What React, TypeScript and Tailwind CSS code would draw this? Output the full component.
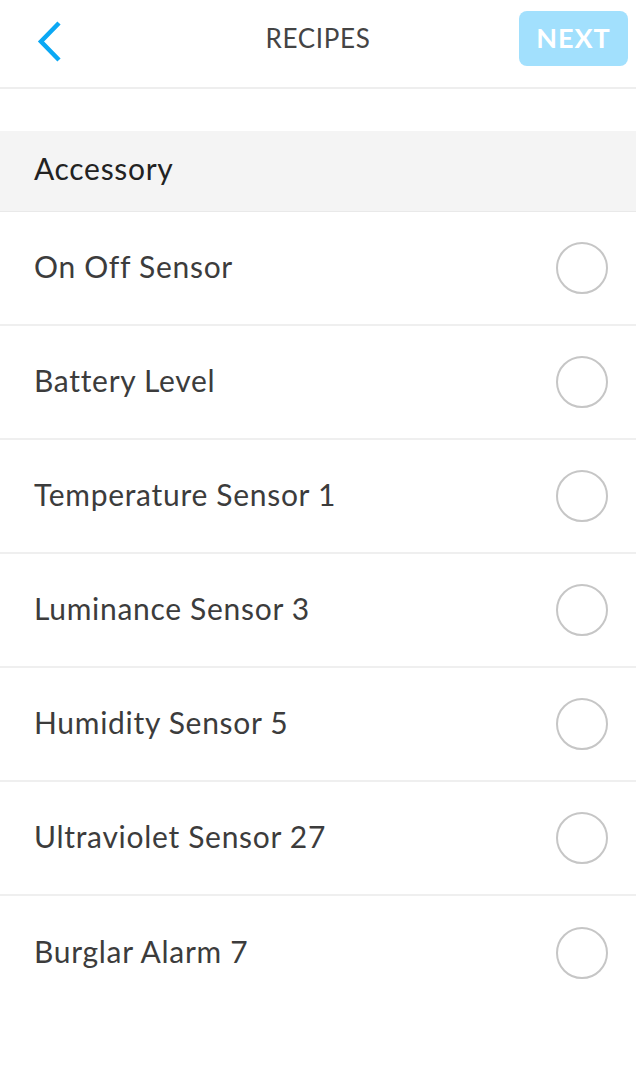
import React from 'react';

const items = [
  'On Off Sensor',
  'Battery Level',
  'Temperature Sensor 1',
  'Luminance Sensor 3',
  'Humidity Sensor 5',
  'Ultraviolet Sensor 27',
  'Burglar Alarm 7',
];

export default function App() {
  return (
    <div className="min-h-[1083px] w-[636px] bg-white font-['Lato',sans-serif]">
      {/* Header */}
      <div className="grid h-[89px] grid-cols-[1fr_auto_1fr] items-center border-b-2 border-[#eeeeee] px-[8px] pb-[10px]">
        <svg width="30" height="44" viewBox="0 0 30 44" fill="none" className="ml-[28px] mt-[6px]">
          <path d="M23 3 L5 21.5 L23 40" stroke="#0ba8f4" strokeWidth="4.5" strokeLinecap="butt" strokeLinejoin="miter" />
        </svg>
        <div className="text-[26px] tracking-[0.7px] text-[#444444]">RECIPES</div>
        <button className="flex h-[55px] w-[109px] items-center justify-center justify-self-end rounded-[8px] bg-[#a2e0fd] text-[27px] font-bold tracking-[1px] text-white">
          NEXT
        </button>
      </div>

      <div className="h-[42px]" />

      {/* Section header */}
      <div className="flex h-[81px] items-center border-b border-[#e9e9e9] bg-[#f4f4f4] pb-[5px] pl-[34px] text-[30px] tracking-[0.7px] text-[#222222]">
        Accessory
      </div>

      {items.map((label, i) => (
        <div
          key={label}
          className={`flex h-[114px] items-center justify-between pl-[34px] pr-[28px] ${
            i < items.length - 1 ? 'border-b-2 border-[#efefef]' : ''
          }`}
        >
          <span className="pb-[4px] text-[30px] tracking-[0.7px] text-[#3c3c3c]">{label}</span>
          <span className="h-[52px] w-[52px] rounded-full border-2 border-[#c6c6c6]" />
        </div>
      ))}
    </div>
  );
}
